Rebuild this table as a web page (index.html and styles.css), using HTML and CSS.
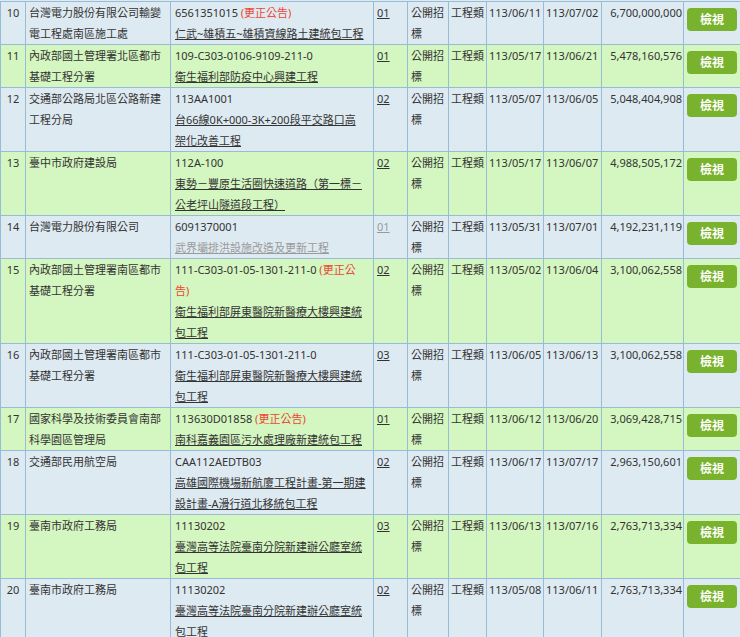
FILE: index.html
```html
<!DOCTYPE html>
<html lang="zh-Hant">
<head>
<meta charset="utf-8">
<title>標案列表</title>
<link rel="stylesheet" href="styles.css">
</head>
<body>
<table class="list">
  <colgroup>
    <col class="c-no"><col class="c-org"><col class="c-desc"><col class="c-ver"><col class="c-way"><col class="c-kind"><col class="c-date"><col class="c-date2"><col class="c-amt"><col class="c-btn">
  </colgroup>
  <tbody>
    <tr class="blue">
      <td class="no">10</td>
      <td class="org">台灣電力股份有限公司輸變電工程處南區施工處</td>
      <td class="desc"><div>6561351015 <span class="fix">(更正公告)</span></div><div><a href="#">仁武~雄積五~雄積資線路土建統包工程</a></div></td>
      <td class="ver"><a href="#">01</a></td>
      <td class="way">公開招標</td>
      <td class="kind">工程類</td>
      <td class="date">113/06/11</td>
      <td class="date">113/07/02</td>
      <td class="amt">6,700,000,000</td>
      <td class="act"><a class="btn" href="#">檢視</a></td>
    </tr>
    <tr class="green">
      <td class="no">11</td>
      <td class="org">內政部國土管理署北區都市基礎工程分署</td>
      <td class="desc"><div>109-C303-0106-9109-211-0</div><div><a href="#">衛生福利部防疫中心興建工程</a></div></td>
      <td class="ver"><a href="#">01</a></td>
      <td class="way">公開招標</td>
      <td class="kind">工程類</td>
      <td class="date">113/05/17</td>
      <td class="date">113/06/21</td>
      <td class="amt">5,478,160,576</td>
      <td class="act"><a class="btn" href="#">檢視</a></td>
    </tr>
    <tr class="blue">
      <td class="no">12</td>
      <td class="org">交通部公路局北區公路新建工程分局</td>
      <td class="desc"><div>113AA1001</div><div><a href="#">台66線0K+000-3K+200段平交路口高<br>架化改善工程</a></div></td>
      <td class="ver"><a href="#">02</a></td>
      <td class="way">公開招標</td>
      <td class="kind">工程類</td>
      <td class="date">113/05/07</td>
      <td class="date">113/06/05</td>
      <td class="amt">5,048,404,908</td>
      <td class="act"><a class="btn" href="#">檢視</a></td>
    </tr>
    <tr class="green">
      <td class="no">13</td>
      <td class="org">臺中市政府建設局</td>
      <td class="desc"><div>112A-100</div><div><a href="#">東勢－豐原生活圈快速道路（第一標－公老坪山隧道段工程）</a></div></td>
      <td class="ver"><a href="#">02</a></td>
      <td class="way">公開招標</td>
      <td class="kind">工程類</td>
      <td class="date">113/05/17</td>
      <td class="date">113/06/07</td>
      <td class="amt">4,988,505,172</td>
      <td class="act"><a class="btn" href="#">檢視</a></td>
    </tr>
    <tr class="blue">
      <td class="no">14</td>
      <td class="org">台灣電力股份有限公司</td>
      <td class="desc"><div>6091370001</div><div><a class="seen" href="#">武界壩排洪設施改造及更新工程</a></div></td>
      <td class="ver"><a class="seen" href="#">01</a></td>
      <td class="way">公開招標</td>
      <td class="kind">工程類</td>
      <td class="date">113/05/31</td>
      <td class="date">113/07/01</td>
      <td class="amt">4,192,231,119</td>
      <td class="act"><a class="btn" href="#">檢視</a></td>
    </tr>
    <tr class="green">
      <td class="no">15</td>
      <td class="org">內政部國土管理署南區都市基礎工程分署</td>
      <td class="desc"><div>111-C303-01-05-1301-211-0 <span class="fix">(更正公<br>告)</span></div><div><a href="#">衛生福利部屏東醫院新醫療大樓興建統包工程</a></div></td>
      <td class="ver"><a href="#">02</a></td>
      <td class="way">公開招標</td>
      <td class="kind">工程類</td>
      <td class="date">113/05/02</td>
      <td class="date">113/06/04</td>
      <td class="amt">3,100,062,558</td>
      <td class="act"><a class="btn" href="#">檢視</a></td>
    </tr>
    <tr class="blue">
      <td class="no">16</td>
      <td class="org">內政部國土管理署南區都市基礎工程分署</td>
      <td class="desc"><div>111-C303-01-05-1301-211-0</div><div><a href="#">衛生福利部屏東醫院新醫療大樓興建統包工程</a></div></td>
      <td class="ver"><a href="#">03</a></td>
      <td class="way">公開招標</td>
      <td class="kind">工程類</td>
      <td class="date">113/06/05</td>
      <td class="date">113/06/13</td>
      <td class="amt">3,100,062,558</td>
      <td class="act"><a class="btn" href="#">檢視</a></td>
    </tr>
    <tr class="green">
      <td class="no">17</td>
      <td class="org">國家科學及技術委員會南部科學園區管理局</td>
      <td class="desc"><div>113630D01858 <span class="fix">(更正公告)</span></div><div><a href="#">南科嘉義園區污水處理廠新建統包工程</a></div></td>
      <td class="ver"><a href="#">01</a></td>
      <td class="way">公開招標</td>
      <td class="kind">工程類</td>
      <td class="date">113/06/12</td>
      <td class="date">113/06/20</td>
      <td class="amt">3,069,428,715</td>
      <td class="act"><a class="btn" href="#">檢視</a></td>
    </tr>
    <tr class="blue">
      <td class="no">18</td>
      <td class="org">交通部民用航空局</td>
      <td class="desc"><div>CAA112AEDTB03</div><div><a href="#">高雄國際機場新航廈工程計畫-第一期建設計畫-A滑行道北移統包工程</a></div></td>
      <td class="ver"><a href="#">02</a></td>
      <td class="way">公開招標</td>
      <td class="kind">工程類</td>
      <td class="date">113/06/17</td>
      <td class="date">113/07/17</td>
      <td class="amt">2,963,150,601</td>
      <td class="act"><a class="btn" href="#">檢視</a></td>
    </tr>
    <tr class="green">
      <td class="no">19</td>
      <td class="org">臺南市政府工務局</td>
      <td class="desc"><div>11130202</div><div><a href="#">臺灣高等法院臺南分院新建辦公廳室統包工程</a></div></td>
      <td class="ver"><a href="#">03</a></td>
      <td class="way">公開招標</td>
      <td class="kind">工程類</td>
      <td class="date">113/06/13</td>
      <td class="date">113/07/16</td>
      <td class="amt">2,763,713,334</td>
      <td class="act"><a class="btn" href="#">檢視</a></td>
    </tr>
    <tr class="blue">
      <td class="no">20</td>
      <td class="org">臺南市政府工務局</td>
      <td class="desc"><div>11130202</div><div><a href="#">臺灣高等法院臺南分院新建辦公廳室統包工程</a></div></td>
      <td class="ver"><a href="#">02</a></td>
      <td class="way">公開招標</td>
      <td class="kind">工程類</td>
      <td class="date">113/05/08</td>
      <td class="date">113/06/11</td>
      <td class="amt">2,763,713,334</td>
      <td class="act"><a class="btn" href="#">檢視</a></td>
    </tr>
  </tbody>
</table>
</body>
</html>
```

FILE: styles.css
```css
html, body {
  margin: 0;
  padding: 0;
  overflow: hidden;
  background: #deeaf2;
}

body {
  font-family: "Noto Sans", "Noto Sans CJK TC", sans-serif;
  font-size: 11px;
  line-height: 21px;
  color: #333333;
}

.list {
  border-collapse: collapse;
  table-layout: fixed;
  width: 741px;
  margin-top: 1px;
}

.c-no { width: 25px; }
.c-org { width: 145px; }
.c-desc { width: 203px; }
.c-ver { width: 34px; }
.c-way { width: 41px; }
.c-kind { width: 38px; }
.c-date { width: 57px; }
.c-date2 { width: 58px; }
.c-amt { width: 82px; }
.c-btn { width: 58px; }

.list td {
  border: 1px solid #98bcd6;
  vertical-align: top;
  padding: 0 3px;
  word-break: normal;
}

.blue td { background: #deeaf2; }
.green td { background: #d4f6c0; }

.list td.no {
  text-align: center;
  padding: 0 1px;
}

.list td.desc {
  padding: 0 2px 0 4px;
}

.list td.kind {
  padding: 0 2px;
}

.list td.date {
  padding: 0 1px 0 2px;
  white-space: nowrap;
}

.list td.amt {
  text-align: right;
  padding: 0 1px 0 2px;
  white-space: nowrap;
}

.list td.act {
  padding: 6px 2px 0 3px;
}

.list a {
  color: #333333;
  text-decoration: underline;
}

.list a.seen {
  color: #9a9a9a;
}

.fix {
  color: #ee4433;
}

.list a.btn {
  display: block;
  width: 50px;
  height: 23px;
  line-height: 23px;
  border-radius: 4px;
  background: #79b32d;
  color: #ffffff;
  text-align: center;
  text-decoration: none;
  font-size: 12px;
  font-weight: bold;
}
```
